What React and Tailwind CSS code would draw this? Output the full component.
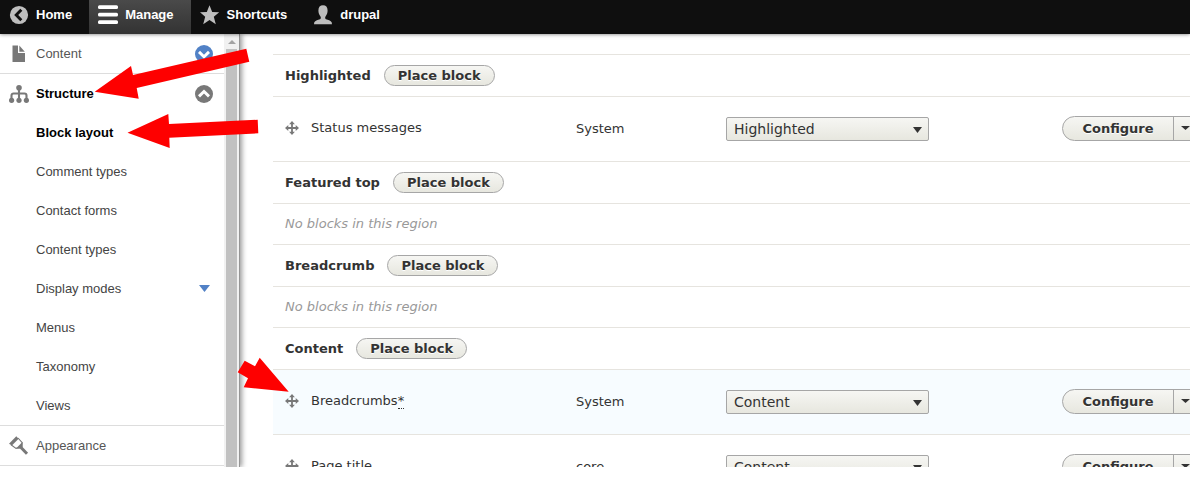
import React from 'react';

const structureLinks = [
  { label: 'Block layout', active: true },
  { label: 'Comment types' },
  { label: 'Contact forms' },
  { label: 'Content types' },
  { label: 'Display modes', expandable: true },
  { label: 'Menus' },
  { label: 'Taxonomy' },
  { label: 'Views' },
];

const regions = [
  { name: 'Highlighted', blocks: [{ title: 'Status messages', category: 'System' }] },
  { name: 'Featured top', blocks: [] },
  { name: 'Breadcrumb', blocks: [] },
  {
    name: 'Content',
    blocks: [
      { title: 'Breadcrumbs', category: 'System', changed: true },
      { title: 'Page title', category: 'core' },
    ],
  },
];

function HomeIcon() {
  return (
    <svg className="size-5" viewBox="0 0 20 20" aria-hidden="true">
      <circle cx="10" cy="10" r="9.1" fill="#bebebe" />
      <path d="M12.3 4.7 7.200 10l5.100 5.300" fill="none" stroke="#0f0f0f" strokeWidth="2.9" />
    </svg>
  );
}

function MenuIcon() {
  return (
    <svg className="size-5" viewBox="0 0 20 20" fill="#fff" aria-hidden="true">
      <rect x="0" y="0.2" width="20" height="3.7" rx="1.5" />
      <rect x="0" y="7.8" width="20" height="3.7" rx="1.5" />
      <rect x="0" y="15.3" width="20" height="3.7" rx="1.5" />
    </svg>
  );
}

function StarIcon() {
  return (
    <svg className="size-5" viewBox="0 0 20 20" aria-hidden="true">
      <path
        d="M9.500.300l2.700 6.600 7 .3-5.400 4.500 2 7.500-6.300-4.100-6.300 4.100 2-7.500L-.2 7.200l7-.3z"
        fill="#bebebe"
      />
    </svg>
  );
}

function PersonIcon() {
  return (
    <svg className="size-5" viewBox="0 0 20 20" aria-hidden="true">
      <path
        d="M10 .2c2.900 0 4.600 1.900 4.600 5.300 0 2.300-.8 4.300-1.900 5.700-.5.700-.7 1.700-.4 2.300.3.600.9.900 1.600 1.100 3.500 1 5.100 1.800 5.100 4.600H1c0-2.800 1.600-3.600 5.100-4.600.7-.2 1.300-.5 1.600-1.100.3-.6.1-1.600-.4-2.300C6.200 9.800 5.400 7.800 5.400 5.500 5.400 2.100 7.100.2 10 .2z"
        fill="#bebebe"
      />
    </svg>
  );
}

function FileIcon() {
  return (
    <svg className="size-5" viewBox="0 0 20 20" fill="#787878" aria-hidden="true">
      <path d="M3.500 1.500H9v7.500h7V18H3.500z" />
      <path d="M10.300 1.500l5.500 6.300h-5.500z" />
    </svg>
  );
}

function StructureIcon() {
  return (
    <svg className="size-5" viewBox="0 0 20 20" aria-hidden="true">
      <path
        d="M10 4v12M2.500 16v-4.500a2 2 0 0 1 2-2h11a2 2 0 0 1 2 2V16"
        fill="none"
        stroke="#787878"
        strokeWidth="2.100"
      />
      <g fill="#787878">
        <circle cx="10" cy="3.800" r="2.800" />
        <circle cx="2.600" cy="16.300" r="2.600" />
        <circle cx="10" cy="16.300" r="2.600" />
        <circle cx="17.400" cy="16.300" r="2.600" />
      </g>
    </svg>
  );
}

function BrushIcon() {
  return (
    <svg className="size-5" viewBox="0 0 20 20" aria-hidden="true">
      <path d="M8.500 2.500l5 4.800-6 5.500-4.600-4.600z" fill="#fff" />
      <path d="M7.300.3l2.300 2.400-6.700 6.900L0 7.800z" fill="#787878" />
      <path d="M9 2l4.200 4.700-.7 4.300M2 8.800l5 3.600 4-1.200" fill="none" stroke="#787878" strokeWidth="1.100" />
      <path d="M7 12.600l6.400-6.500.3 5.100-2.500 1.600z" fill="#787878" />
      <path d="M12 11.500l6 6.300" stroke="#787878" strokeWidth="3" />
    </svg>
  );
}

function RoundChevron({ open }) {
  return (
    <svg className="size-5" viewBox="0 0 20 20" aria-hidden="true">
      <circle cx="10" cy="10" r="9" fill={open ? '#787878' : '#5181c6'} />
      <path
        d={open ? 'M5 12.400 10 7.500l5 4.900' : 'M5 7.900 10 12.800l5-4.900'}
        fill="none"
        stroke="#fff"
        strokeWidth="2.900"
      />
    </svg>
  );
}

function MoveIcon() {
  return (
    <svg className="size-3.5" viewBox="0 0 14 14" aria-hidden="true">
      <path d="M7 1.500v11M1.500 7h11" stroke="#787878" strokeWidth="1.800" />
      <path
        d="M7 0l2.900 3.300H4.100zM7 14l2.900-3.300H4.100zM0 7l3.300-2.900v5.800zM14 7l-3.300-2.900v5.800z"
        fill="#787878"
      />
    </svg>
  );
}

function Caret({ className }) {
  return (
    <svg className={className} viewBox="0 0 10 6" preserveAspectRatio="none" aria-hidden="true">
      <path d="M0 0h10L5 6z" fill="currentColor" />
    </svg>
  );
}

function BarLink({ icon, label, active }) {
  return (
    <a
      href="#"
      className={
        active
          ? 'flex items-center gap-[7px] bg-gradient-to-b from-[#4a4a4a] to-[#333333] pr-[17px] pb-[5px] pl-[9px] text-white'
          : 'flex items-center gap-[7px] pr-[17px] pb-[5px] pl-[9px] text-white'
      }
    >
      {icon}
      {label}
    </a>
  );
}

function TopBar() {
  return (
    <nav
      aria-label="Administration"
      className="relative z-10 flex h-[34px] shrink-0 bg-[#0f0f0f] text-[13px] font-bold shadow-[0_0_4px_rgba(0,0,0,0.6)]"
    >
      <BarLink icon={<HomeIcon />} label="Home" />
      <BarLink icon={<MenuIcon />} label="Manage" active />
      <BarLink icon={<StarIcon />} label="Shortcuts" />
      <BarLink icon={<PersonIcon />} label="drupal" />
    </nav>
  );
}

function Sidebar() {
  return (
    <aside className="flex shrink-0 border-r border-[#969696] bg-white shadow-[2px_0_5px_rgba(0,0,0,0.4)]">
      <nav aria-label="Manage" className="w-56 text-[13px] text-[#565656]">
        <div className="flex h-10 items-center border-b border-[#dddddd] pr-[10px] pl-[9px]">
          <a href="#" className="flex flex-1 items-center gap-[7px]">
            <FileIcon />
            Content
          </a>
          <button type="button" aria-label="Expand Content">
            <RoundChevron />
          </button>
        </div>
        <div className="border-b border-[#dddddd]">
          <div className="flex h-[39px] items-center pr-[10px] pl-[9px]">
            <a href="#" className="flex flex-1 items-center gap-[7px] font-bold text-black">
              <StructureIcon />
              Structure
            </a>
            <button type="button" aria-label="Collapse Structure">
              <RoundChevron open />
            </button>
          </div>
          <ul>
            {structureLinks.map((link) => (
              <li key={link.label} className="flex h-[39px] items-center justify-between pr-[14px] pl-9">
                <a href="#" className={link.active ? 'font-bold text-black' : 'text-[#444444]'}>
                  {link.label}
                </a>
                {link.expandable && (
                  <button type="button" aria-label="Expand Display modes" className="text-[#5181c6]">
                    <Caret className="h-[7px] w-[11px]" />
                  </button>
                )}
              </li>
            ))}
          </ul>
        </div>
        <div className="flex h-10 items-center border-b border-[#dddddd] pl-[9px]">
          <a href="#" className="flex items-center gap-[7px]">
            <BrushIcon />
            Appearance
          </a>
        </div>
      </nav>
      <div className="flex w-[15px] flex-col bg-[#f1f1f1] pr-[2px] pl-[2px]">
        <div className="flex h-[15px] items-center justify-center text-[#a3a3a3]">
          <Caret className="h-1 w-2 rotate-180" />
        </div>
        <div className="flex-1 bg-[#c1c1c1]" />
      </div>
    </aside>
  );
}

function BlockRow({ block, region }) {
  return (
    <tr className={block.changed ? 'bg-[#f7fcff]' : ''}>
      <td className="h-[65px] border-b border-[#e6e4df] pl-3">
        <div className="flex items-center gap-3 pb-[2px]">
          <MoveIcon />
          <span>
            {block.title}
            {block.changed && (
              <abbr title="Changed" className="border-b border-dotted border-[#333333] no-underline">
                *
              </abbr>
            )}
          </span>
        </div>
      </td>
      <td className="border-b border-[#e6e4df] pl-3">{block.category}</td>
      <td className="border-b border-[#e6e4df] pl-3">
        <div className="relative w-[203px]">
          <select
            aria-label={`Region for ${block.title} block`}
            defaultValue={region}
            className="block h-6 w-full appearance-none rounded-[2px] border border-[#a6a6a6] bg-gradient-to-b from-[#f6f6f3] to-[#e7e7df] pl-[7px] text-[14px] leading-[22px] text-[#333333]"
          >
            {regions.map((r) => (
              <option key={r.name}>{r.name}</option>
            ))}
          </select>
          <Caret className="pointer-events-none absolute top-[10px] right-[7px] h-[6px] w-[9px]" />
        </div>
      </td>
      <td className="border-b border-[#e6e4df] pb-[2px] pl-3">
        <div className="flex h-[25px] w-[144px] overflow-hidden rounded-full border border-[#a6a6a6] bg-gradient-to-b from-[#f6f6f3] to-[#e7e7df]">
          <a href="#" className="w-[110px] text-center font-bold leading-[23px] [text-shadow:0_1px_#fff]">
            Configure
          </a>
          <button
            type="button"
            aria-label="List additional actions"
            className="flex flex-1 items-center border-l border-[#a6a6a6] pl-[7px]"
          >
            <Caret className="h-1 w-[9px]" />
          </button>
        </div>
      </td>
    </tr>
  );
}

function RegionRows({ region }) {
  return (
    <>
      <tr>
        <th colSpan={4} scope="colgroup" className="h-[42px] border-b border-[#e6e4df] pl-3 text-left">
          <div className="flex items-center gap-[13px]">
            {region.name}
            <a
              href="#"
              className="h-[21px] rounded-full border border-[#a6a6a6] bg-gradient-to-b from-[#f6f6f3] to-[#e7e7df] px-[13px] leading-[19px] [text-shadow:0_1px_#fff]"
            >
              Place block
            </a>
          </div>
        </th>
      </tr>
      {region.blocks.length === 0 && (
        <tr>
          <td colSpan={4} className="h-[41px] border-b border-[#e6e4df] pl-3 text-[#999999] italic">
            No blocks in this region
          </td>
        </tr>
      )}
      {region.blocks.map((block) => (
        <BlockRow key={block.title} block={block} region={region.name} />
      ))}
    </>
  );
}

function Arrows() {
  return (
    <svg
      className="pointer-events-none absolute top-0 left-0 z-20 h-[400px] w-[300px]"
      viewBox="0 0 300 400"
      fill="#fe0000"
      aria-hidden="true"
    >
      <path d="M94.700 91.700 131 66l2 9 113.300-26.300 3 13L136.700 88l2 10.700z" />
      <path d="M127.500 132.700 168.300 114l.7 10 88.700-4.300.6 13.600-89 4.400.4 10.300z" />
      <path d="M288.700 391.700 259.700 357.700l-4.700 8.600-10.300-5.600-7 11.600 10.300 6-4.300 9z" />
    </svg>
  );
}

export default function App() {
  return (
    <div className="relative flex h-screen flex-col overflow-hidden bg-white pb-[25px] font-['Liberation_Sans',Arial,sans-serif]">
      <TopBar />
      <div className="flex min-h-0 flex-1 overflow-hidden">
        <Sidebar />
        <main className="min-w-0 flex-1 overflow-hidden pt-5 pl-[33px] font-['DejaVu_Sans',sans-serif] text-[13px] text-[#333333]">
          <table className="w-full min-w-[945px] table-fixed border-separate border-spacing-0 border-t border-[#e6e4df]">
            <colgroup>
              <col className="w-[291px]" />
              <col className="w-[150px]" />
              <col className="w-[336px]" />
              <col />
            </colgroup>
            <tbody>
              {regions.map((region) => (
                <RegionRows key={region.name} region={region} />
              ))}
            </tbody>
          </table>
        </main>
      </div>
      <Arrows />
    </div>
  );
}
